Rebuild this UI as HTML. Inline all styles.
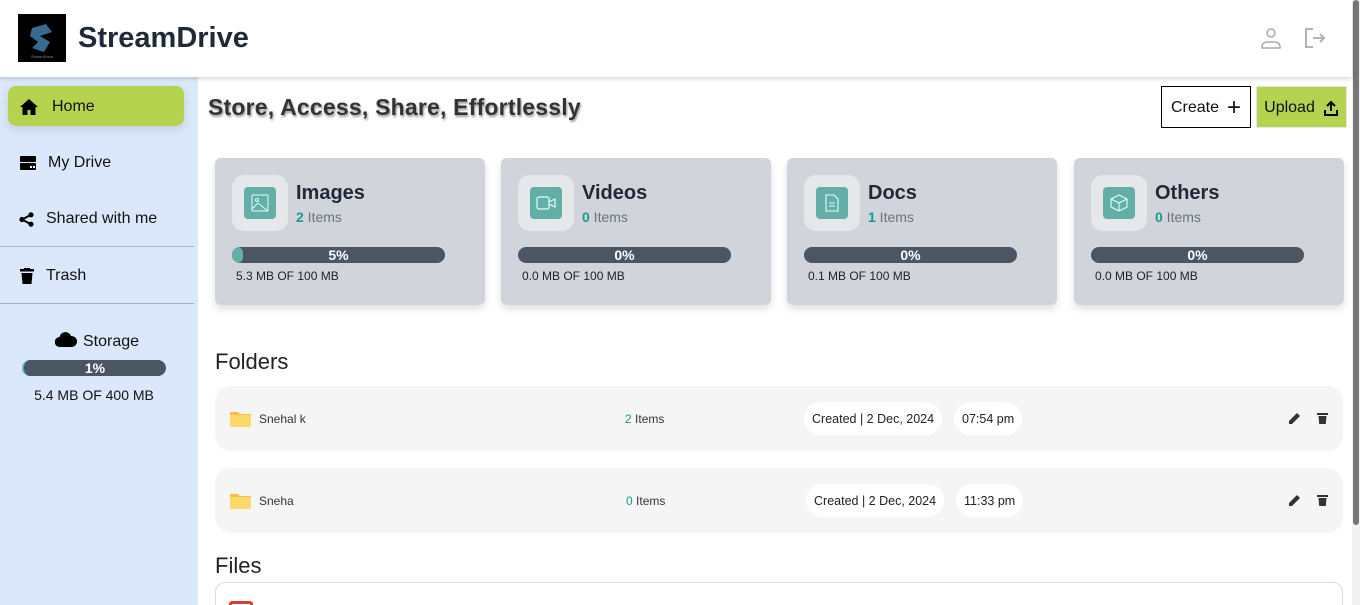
<!DOCTYPE html>
<html style="overflow:hidden;height:605px"><head><style>
*{box-sizing:border-box;margin:0;padding:0}
body{width:1360px;height:605px;overflow:hidden;font-family:"Liberation Sans",sans-serif;background:#fff;position:relative;color:#111}
.hdr{position:absolute;left:0;top:0;width:1352px;height:77px;background:#fff;box-shadow:0 2px 4px rgba(0,0,0,.15);z-index:2}
.logo{position:absolute;left:18px;top:14px;width:48px;height:48px;background:#000}
.brand{position:absolute;left:78px;top:22px;font-size:29px;font-weight:bold;color:#1f2937}
.side{position:absolute;left:0;top:77px;width:198px;height:528px;background:#dbe8fb}
.nav{position:absolute;left:8px;width:176px;height:40px;display:flex;align-items:center;font-size:16px;color:#111;padding-top:2px}
.home{background:#b5d34f;border-radius:8px;top:9px;box-shadow:0 4px 10px rgba(0,0,0,.1)}
.hr{position:absolute;left:0;width:194px;height:1px;background:#a8b3c2}
.scroll{position:absolute;left:1352px;top:0;width:8px;height:605px;background:#f1f1f1}
.thumb{position:absolute;left:1353px;top:0;width:6px;height:525px;background:#777;border-radius:3px}
h1{position:absolute;left:208px;top:94px;font-size:23px;font-weight:bold;color:#333;text-shadow:1px 2px 2px #999;letter-spacing:.2px}
.btn{position:absolute;top:86px;height:42px;display:flex;align-items:center;justify-content:center;font-size:16px;gap:8px;padding-top:2px}
.card{position:absolute;top:158px;width:270px;height:147px;background:#d1d5db;border-radius:6px;box-shadow:0 4px 8px rgba(0,0,0,.12)}
.ib{position:absolute;left:17px;top:17px;width:56px;height:56px;background:#e5e7eb;border-radius:12px}
.ii{position:absolute;left:12px;top:12px;width:32px;height:32px;background:#64aea8;border-radius:4px;display:flex;align-items:center;justify-content:center}
.ct{position:absolute;left:81px;top:24px;font-size:20px;font-weight:bold;color:#1f2937}
.cs{position:absolute;left:81px;top:51px;font-size:14px;color:#6b7280}
.cs b{color:#169b8c}
.bar{position:absolute;left:17px;top:89px;width:213px;height:16px;background:#4b5563;border-radius:8px;color:#fff;font-size:14px;font-weight:bold;text-align:center;line-height:16px;overflow:hidden}
.cm{position:absolute;left:21px;top:111px;font-size:12px;color:#222}
.sec{position:absolute;left:215px;font-size:22px;color:#222}
.row{position:absolute;left:215px;width:1128px;height:65px;background:#f5f5f5;border-radius:16px;font-size:12px;color:#333}
.pill{position:absolute;top:16px;height:33px;background:#fff;border-radius:17px;line-height:34px;padding:0 8px;font-size:12.5px;color:#222}
</style></head><body>
<div class="hdr">
 <div class="logo"><svg width="48" height="48"><path d="M14 14 L28 10 L34 18 L22 22 L32 28 L26 38 L14 34 L20 28 L12 22Z" fill="#3f7ea8" opacity=".85"/><text x="24" y="44" font-size="4" fill="#789" text-anchor="middle">StreamDrive</text></svg></div>
 <div class="brand">StreamDrive</div>
 <svg style="position:absolute;left:1259px;top:26px" width="24" height="24" fill="none" stroke="#aaa" stroke-width="1.5"><circle cx="12" cy="7" r="4"/><path d="M3 22v-2a5 5 0 0 1 5-4h8a5 5 0 0 1 5 4v2z"/></svg>
 <svg style="position:absolute;left:1303px;top:26px" width="24" height="24" fill="none" stroke="#aaa" stroke-width="1.8"><path d="M10 3H3v18h7M10 12h11M17 8l4 4-4 4"/></svg>
</div>
<div class="side">
 <div class="nav home"><svg style="margin:0 14px 0 12px" width="18" height="16" viewBox="0 0 18 16"><path d="M9 0L0 8h2.5v8h5v-5h3v5h5V8H18z" fill="#000"/></svg>Home</div>
 <div class="nav" style="top:65px"><svg style="margin:0 12px 0 12px" width="16" height="14"><rect x="0" y="0" width="16" height="6" rx="1" fill="#000"/><rect x="0" y="7" width="16" height="7" rx="1" fill="#000"/><rect x="10" y="10" width="2" height="2" fill="#fff"/><rect x="13" y="10" width="2" height="2" fill="#fff"/></svg>My Drive</div>
 <div class="nav" style="top:121px"><svg style="margin:0 12px 0 11px" width="15" height="15"><circle cx="3" cy="7.5" r="2.6"/><circle cx="12" cy="2.8" r="2.6"/><circle cx="12" cy="12.2" r="2.6"/><path d="M3 7.5L12 2.8M3 7.5L12 12.2" stroke="#000" stroke-width="2"/></svg>Shared with me</div>
 <div class="hr" style="top:169px"></div>
 <div class="nav" style="top:178px"><svg style="margin:0 12px 0 12px" width="14" height="16"><rect x="0" y="1" width="14" height="2.5" fill="#000"/><rect x="4" y="0" width="6" height="2" fill="#000"/><path d="M1.5 5h11l-1 11h-9z" fill="#000"/></svg>Trash</div>
 <div class="hr" style="top:226px"></div>
 <div style="position:absolute;left:0;width:194px;top:255px;text-align:center;font-size:16px"><svg width="22" height="15" style="vertical-align:-1px;margin-right:6px"><path d="M5 15a5 5 0 0 1-.5-10A6 6 0 0 1 16 4a5.5 5.5 0 0 1 1 11z" fill="#000"/></svg>Storage</div>
 <div style="position:absolute;left:22px;top:283px;width:144px;height:16px;background:#4b5563;border-radius:8px;color:#fff;font-size:14px;font-weight:bold;text-align:center;line-height:16px;border-left:2px solid #64aea8">1%</div>
 <div style="position:absolute;left:0;width:188px;top:310px;text-align:center;font-size:14px">5.4 MB OF 400 MB</div>
</div>
<div class="scroll"></div><div class="thumb"></div>
<h1>Store, Access, Share, Effortlessly</h1>
<div class="btn" style="left:1161px;width:90px;border:1px solid #000">Create <span style="font-size:24px;font-weight:300;line-height:1">+</span></div>
<div class="btn" style="left:1256px;width:91px;background:#b5d34f;border:1px solid #e5e7eb">Upload <svg width="16" height="16" fill="none" stroke="#000" stroke-width="2"><path d="M8 11V2M4 6l4-4 4 4M2 10v5h12v-5"/></svg></div>

<div class="card" style="left:215px"><div class="ib"><div class="ii"><svg width="18" height="18" fill="none" stroke="#dff" stroke-width="1"><rect x="1" y="1" width="16" height="16" rx="1"/><circle cx="6" cy="6" r="1.5"/><path d="M1 15l6-6 10 8"/></svg></div></div><div class="ct">Images</div><div class="cs"><b>2</b> Items</div><div class="bar"><div style="position:absolute;left:0;top:0;width:11px;height:16px;background:#64aea8;border-radius:8px"></div>5%</div><div class="cm">5.3 MB OF 100 MB</div></div>
<div class="card" style="left:501px"><div class="ib"><div class="ii"><svg width="20" height="14" fill="none" stroke="#dff" stroke-width="1.2"><rect x="1" y="1" width="12" height="12" rx="2"/><path d="M13 6l6-3v8l-6-3"/></svg></div></div><div class="ct">Videos</div><div class="cs"><b>0</b> Items</div><div class="bar">0%</div><div class="cm">0.0 MB OF 100 MB</div></div>
<div class="card" style="left:787px"><div class="ib"><div class="ii"><svg width="14" height="18" fill="none" stroke="#dff" stroke-width="1.1"><path d="M1 1h8l4 4v12H1z M4 9h6M4 12h6"/></svg></div></div><div class="ct">Docs</div><div class="cs"><b>1</b> Items</div><div class="bar">0%</div><div class="cm">0.1 MB OF 100 MB</div></div>
<div class="card" style="left:1074px"><div class="ib"><div class="ii"><svg width="18" height="18" fill="none" stroke="#dff" stroke-width="1.1"><path d="M9 1l8 4v8l-8 4-8-4V5z M1 5l8 4 8-4M9 9v8"/></svg></div></div><div class="ct">Others</div><div class="cs"><b>0</b> Items</div><div class="bar">0%</div><div class="cm">0.0 MB OF 100 MB</div></div>

<div class="sec" style="top:349px">Folders</div>
<div class="row" style="top:386px">
 <svg style="position:absolute;left:15px;top:25px" width="21" height="16"><path d="M0 1h8l2 2h11v13H0z" fill="#f6c142"/><rect x="0" y="4" width="21" height="12" fill="#fcd96a"/></svg>
 <span style="position:absolute;left:44px;top:26px">Snehal k</span>
 <span style="position:absolute;left:410px;top:26px"><span style="color:#169b8c">2</span> Items</span>
 <div class="pill" style="left:589px">Created | 2 Dec, 2024</div>
 <div class="pill" style="left:739px">07:54 pm</div>
 <svg style="position:absolute;left:1074px;top:26px" width="12" height="12"><path d="M0 12v-3l8-8 3 3-8 8z" fill="#333"/></svg>
 <svg style="position:absolute;left:1102px;top:26px" width="11" height="12"><rect x="0" y="1" width="11" height="2" fill="#333"/><path d="M1.5 4h8l-.7 8H2.2z" fill="#333"/></svg>
</div>
<div class="row" style="top:468px">
 <svg style="position:absolute;left:15px;top:25px" width="21" height="16"><path d="M0 1h8l2 2h11v13H0z" fill="#f6c142"/><rect x="0" y="4" width="21" height="12" fill="#fcd96a"/></svg>
 <span style="position:absolute;left:44px;top:26px">Sneha</span>
 <span style="position:absolute;left:411px;top:26px"><span style="color:#169b8c">0</span> Items</span>
 <div class="pill" style="left:591px">Created | 2 Dec, 2024</div>
 <div class="pill" style="left:741px">11:33 pm</div>
 <svg style="position:absolute;left:1074px;top:26px" width="12" height="12"><path d="M0 12v-3l8-8 3 3-8 8z" fill="#333"/></svg>
 <svg style="position:absolute;left:1102px;top:26px" width="11" height="12"><rect x="0" y="1" width="11" height="2" fill="#333"/><path d="M1.5 4h8l-.7 8H2.2z" fill="#333"/></svg>
</div>
<div class="sec" style="top:553px">Files</div>
<div style="position:absolute;left:215px;top:582px;width:1128px;height:23px;border:1px solid #ddd;border-bottom:none;border-radius:10px 10px 0 0;overflow:hidden"><div style="position:absolute;left:13px;top:18px;width:24px;height:12px;border:3px solid #e53935;border-radius:3px"></div></div>
</body></html>
